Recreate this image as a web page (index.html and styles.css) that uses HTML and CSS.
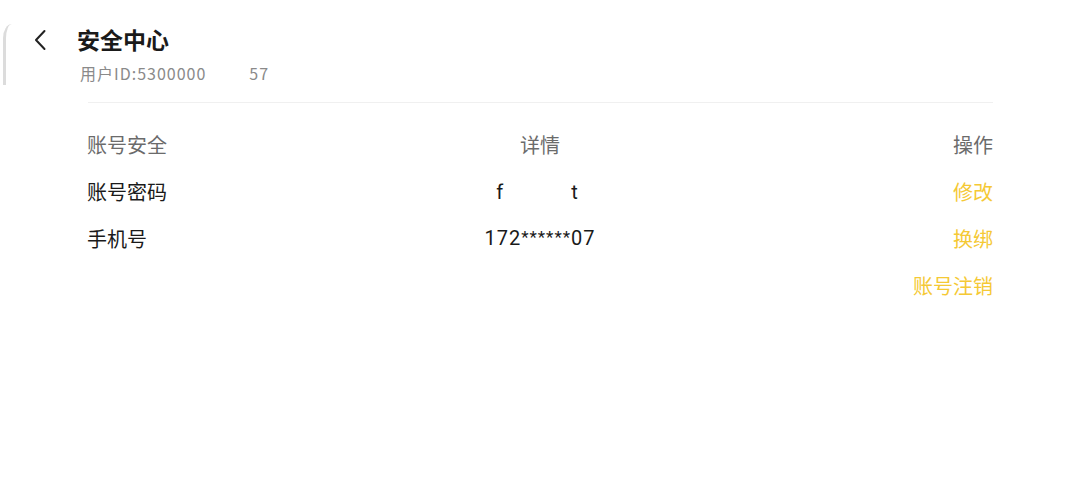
FILE: index.html
```html
<!DOCTYPE html>
<html lang="zh-CN">
<head>
<meta charset="utf-8">
<title>安全中心</title>
<link rel="stylesheet" href="styles.css">
</head>
<body>
<div class="page">
  <div class="edge"></div>
  <header class="header">
    <button class="back" aria-label="返回">
      <svg width="14" height="22" viewBox="0 0 14 22"><path d="M11.5 2 L3 11 L11.5 20" fill="none" stroke="#222" stroke-width="2" stroke-linecap="round" stroke-linejoin="round"/></svg>
    </button>
    <div class="titles">
      <h1 class="title">安全中心</h1>
      <div class="uid">用户ID:5300000<span class="mask-id"></span>57</div>
    </div>
  </header>
  <main class="content">
    <div class="divider"></div>
    <div class="table">
      <div class="row head">
        <div class="c1">账号安全</div>
        <div class="c2">详情</div>
        <div class="c3">操作</div>
      </div>
      <div class="row">
        <div class="c1">账号密码</div>
        <div class="c2 num pw">f<span class="mask-pw"></span>t</div>
        <div class="c3 link">修改</div>
      </div>
      <div class="row">
        <div class="c1">手机号</div>
        <div class="c2 num">172<span class="ast">******</span>07</div>
        <div class="c3 link">换绑</div>
      </div>
      <div class="row">
        <div class="c1"></div>
        <div class="c2"></div>
        <div class="c3 link">账号注销</div>
      </div>
    </div>
  </main>
</div>
</body>
</html>
```

FILE: styles.css
```css
* { box-sizing: border-box; }
html, body { margin: 0; padding: 0; background: #fff; }
body {
  font-family: "Noto Sans CJK SC", "Noto Sans", sans-serif;
  color: #1a1a1a;
  width: 1080px;
  height: 486px;
  overflow: hidden;
}
.page { position: relative; height: 100%; }
.edge {
  position: absolute;
  left: 3px;
  top: 24px;
  width: 9px;
  height: 61px;
  border-left: 3px solid #dcdcdc;
  border-top-left-radius: 14px 22px;
}
.header {
  display: flex;
  align-items: flex-start;
  padding: 24px 0 0 33px;
}
.back {
  border: 0;
  background: none;
  padding: 0;
  margin: 5px 0 0 0;
  width: 14px;
  height: 22px;
  display: flex;
}
.titles { margin-left: 30px; }
.title {
  margin: 0;
  font-size: 23px;
  line-height: 30px;
  font-weight: 700;
  color: #1a1a1a;
}
.uid {
  margin: 9px 0 0 3px;
  font-size: 16px;
  line-height: 20px;
  letter-spacing: 1px;
  color: #8a8a8a;
  font-family: "Noto Sans CJK SC", sans-serif;
}
.mask-id { display: inline-block; width: 43px; }
.content { padding: 0 87px 0 87px; }
.divider {
  margin-top: 19px;
  height: 1px;
  background: #f0f0f0;
  margin-left: 1px;
}
.table { margin-top: 18px; }
.row {
  display: grid;
  grid-template-columns: 1fr 1fr 1fr;
  height: 47px;
  align-items: center;
  font-size: 20px;
  line-height: 28px;
}
.row.head { color: #6b6b6b; }
.c2 { text-align: center; }
.c3 { text-align: right; }
.num {
  font-family: "Roboto", "Noto Sans", sans-serif;
  font-size: 20px;
  letter-spacing: 1px;
  color: #1a1a1a;
}
.pw { padding-right: 5px; }
.ast { font-size: 17px; position: relative; top: -2px; }
.mask-pw { display: inline-block; width: 67px; }
.link { color: #f5c935; }
```
